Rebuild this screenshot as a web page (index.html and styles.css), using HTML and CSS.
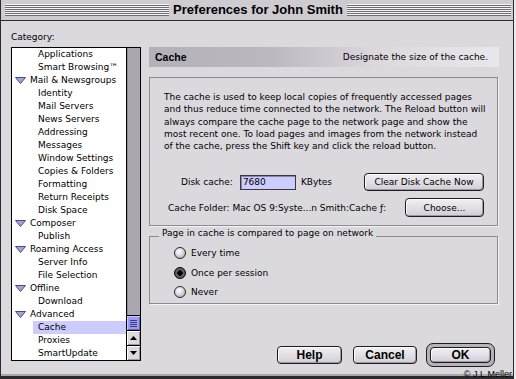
FILE: index.html
```html
<!DOCTYPE html>
<html>
<head>
  <meta charset="utf-8">
  <title>Preferences for John Smith</title>
  <link rel="stylesheet" href="styles.css">
</head>
<body>
  <div class="window">
    <div class="titlebar">
      <span class="stripes"></span>
      <h1 class="title">Preferences for John Smith</h1>
      <span class="stripes"></span>
    </div>

    <div class="main">
      <div class="sidebar">
        <div class="label">Category:</div>
        <div class="list">
          <ul class="items">
            <li class="child">Applications</li>
            <li class="child">Smart Browsing™</li>
            <li class="parent"><svg class="twisty" width="11" height="7" viewBox="0 0 11 7"><polygon points="0.5,0.5 10.5,0.5 5.5,6.5" /></svg>Mail &amp; Newsgroups</li>
            <li class="child">Identity</li>
            <li class="child">Mail Servers</li>
            <li class="child">News Servers</li>
            <li class="child">Addressing</li>
            <li class="child">Messages</li>
            <li class="child">Window Settings</li>
            <li class="child">Copies &amp; Folders</li>
            <li class="child">Formatting</li>
            <li class="child">Return Receipts</li>
            <li class="child">Disk Space</li>
            <li class="parent"><svg class="twisty" width="11" height="7" viewBox="0 0 11 7"><polygon points="0.5,0.5 10.5,0.5 5.5,6.5" /></svg>Composer</li>
            <li class="child">Publish</li>
            <li class="parent"><svg class="twisty" width="11" height="7" viewBox="0 0 11 7"><polygon points="0.5,0.5 10.5,0.5 5.5,6.5" /></svg>Roaming Access</li>
            <li class="child">Server Info</li>
            <li class="child">File Selection</li>
            <li class="parent"><svg class="twisty" width="11" height="7" viewBox="0 0 11 7"><polygon points="0.5,0.5 10.5,0.5 5.5,6.5" /></svg>Offline</li>
            <li class="child">Download</li>
            <li class="parent"><svg class="twisty" width="11" height="7" viewBox="0 0 11 7"><polygon points="0.5,0.5 10.5,0.5 5.5,6.5" /></svg>Advanced</li>
            <li class="child selected">Cache</li>
            <li class="child">Proxies</li>
            <li class="child">SmartUpdate</li>
          </ul>
          <div class="scrollbar">
            <div class="track"></div>
            <div class="thumb"><span class="grip"></span></div>
            <div class="arrow"><svg width="7" height="4" viewBox="0 0 7 4"><polygon points="3.5,0 7,4 0,4" /></svg></div>
            <div class="arrow"><svg width="7" height="4" viewBox="0 0 7 4"><polygon points="0,0 7,0 3.5,4" /></svg></div>
          </div>
        </div>
      </div>

      <div class="content">
        <div class="panel-head">
          <b>Cache</b>
          <span>Designate the size of the cache.</span>
        </div>

        <div class="box">
          <p class="info">The cache is used to keep local copies of frequently accessed pages<br>and thus reduce time connected to the network. The Reload button will<br>always compare the cache page to the network page and show the<br>most recent one. To load pages and images from the network instead<br>of the cache, press the Shift key and click the reload button.</p>
          <div class="row disk">
            <span>Disk cache:</span>
            <input class="field" type="text" value="7680">
            <span>KBytes</span>
            <button class="btn wide">Clear Disk Cache Now</button>
          </div>
          <div class="row folder">
            <span>Cache Folder: Mac OS 9:Syste...n Smith:Cache ƒ:</span>
            <button class="btn choose">Choose...</button>
          </div>
        </div>

        <fieldset class="group">
          <legend>Page in cache is compared to page on network</legend>
          <label class="radio"><span class="dot"></span>Every time</label>
          <label class="radio"><span class="dot on"></span>Once per session</label>
          <label class="radio"><span class="dot"></span>Never</label>
        </fieldset>

        <div class="actions">
          <button class="btn big">Help</button>
          <button class="btn big">Cancel</button>
          <span class="default"><button class="btn big ok">OK</button></span>
        </div>
      </div>
    </div>

    <div class="copyright">© J.L.Meller</div>
  </div>
</body>
</html>
```

FILE: styles.css
```css
*{margin: 0;padding: 0;box-sizing: border-box;}
ul{list-style: none;}
html, body{
  width: 100%;
  height: 100%;
  background-color: #eceaee;
}
body{
  font-family: "DejaVu Sans", sans-serif;
  font-size: 9px;
  color: #000;
}
.window{
  position: relative;
  width: 514px;
  height: 379px;
  background-color: #dcd9de;
  border-left: 1px solid #2c2a2e;
  border-right: 1px solid #2c2a2e;
  border-bottom: 3px solid #2c2a2e;
  box-shadow: inset 0 -2px 0 #a9a6ac;
}

/* title bar */
.titlebar{
  height: 21px;
  display: flex;
  align-items: center;
  padding: 0 2px 0 4px;
  background-color: #cfccd1;
  border-bottom: 1px solid #2c2a2e;
}
.stripes{
  flex: 1;
  height: 12px;
  background: repeating-linear-gradient(to bottom, #f6f4f7 0 1px, #6f6c72 1px 2px);
}
.title{
  margin: 0 4px;
  font-family: "Liberation Sans", sans-serif;
  font-size: 13px;
  font-weight: bold;
  line-height: 16px;
}

.main{
  display: flex;
  padding-left: 10px;
}

/* category list */
.sidebar{
  width: 130px;
  padding-top: 10px;
}
.label{
  line-height: 12px;
  margin-bottom: 4px;
}
.list{
  display: flex;
  height: 314px;
  border: 1px solid #000;
}
.items{
  flex: 1;
  background-color: #fff;
  overflow: hidden;
}
.items li{
  height: 13px;
  line-height: 13px;
  white-space: nowrap;
}
.parent{
  display: flex;
  align-items: center;
  padding-left: 3px;
}
.twisty{
  margin-right: 4px;
}
.twisty polygon{
  fill: #a4a2e6;
  stroke: #4c4a78;
  stroke-width: 1;
}
.child{
  margin-left: 21px;
  padding-left: 5px;
}
.selected{
  background-color: #ccccff;
}
.scrollbar{
  width: 14px;
  display: flex;
  flex-direction: column;
  border-left: 1px solid #000;
}
.track{
  flex: 1;
  background: linear-gradient(to right, #8f8c93 0 1px, #aaa7ae 1px);
}
.thumb{
  height: 15px;
  border-top: 1px solid #000;
  background-color: #9c9cf2;
  box-shadow: inset 1px 1px 0 #c8c8ff, inset -1px -1px 0 #6464b8;
  display: flex;
  align-items: center;
  justify-content: center;
}
.grip{
  width: 7px;
  height: 7px;
  background: repeating-linear-gradient(to bottom, #3c3c7a 0 1px, transparent 1px 2px);
}
.arrow{
  height: 15px;
  border-top: 1px solid #000;
  background-color: #dddadf;
  box-shadow: inset 1px 1px 0 #fff, inset -1px -1px 0 #9c99a0;
  display: flex;
  align-items: center;
  justify-content: center;
}

/* right panel */
.content{
  width: 350px;
  margin-left: 8px;
  padding-top: 26px;
}
.panel-head{
  height: 20px;
  display: flex;
  align-items: center;
  justify-content: space-between;
  padding: 0 11px 0 6px;
  background: linear-gradient(to right, #b4b0b8 0%, #bcb8c0 35%, #dcd8de 65%, #e9e6ec 100%);
}
.panel-head b{
  font-family: "Liberation Sans", sans-serif;
  font-size: 10.5px;
}
.box{
  width: 349px;
  height: 149px;
  margin-top: 10px;
  padding: 13px 13px 0 14px;
  border: 1px solid #8d8a90;
  box-shadow: 1px 1px 0 #f4f2f5;
}
.info{
  line-height: 12.25px;
  white-space: nowrap;
}
.row{
  display: flex;
  align-items: center;
}
.disk{
  margin-top: 21px;
  padding-left: 17px;
  gap: 7px;
}
.folder{
  margin-top: 7px;
  padding-left: 4px;
}
.field{
  width: 56px;
  height: 15px;
  padding-left: 2px;
  font-family: "DejaVu Sans", sans-serif;
  font-size: 9px;
  background-color: #ccccff;
  border: 1px solid #3a383c;
  box-shadow: inset 1px 1px 0 #8886aa;
  outline: none;
}
.disk .field + span{
  margin-left: -2px;
}
.btn{
  font-family: "DejaVu Sans", sans-serif;
  font-size: 9px;
  color: #000;
  border: 1px solid #1e1c20;
  border-radius: 4px;
  background: linear-gradient(to bottom, #f2f0f4, #d2ced6);
  box-shadow: inset 1px 1px 0 #fff, inset -1px -1px 0 #9e9aa2;
}
.wide{
  width: 120px;
  height: 18px;
  margin-left: auto;
}
.choose{
  width: 79px;
  height: 19px;
  margin-left: auto;
}

/* radio group */
.group{
  width: 349px;
  height: 77px;
  margin-top: 1px;
  padding: 0 0 3px 24px;
  border: 1px solid #8d8a90;
  box-shadow: 1px 1px 0 #f4f2f5;
  display: flex;
  flex-direction: column;
  gap: 4px;
}
.group legend{
  margin-left: -15px;
  padding: 0 3px 6px;
  line-height: 12px;
}
.radio{
  height: 16px;
  display: flex;
  align-items: center;
  gap: 5px;
}
.dot{
  width: 12px;
  height: 12px;
  border-radius: 50%;
  border: 1px solid #2a282c;
  background: radial-gradient(circle at 40% 35%, #ffffff 0, #e4e2e6 35%, #a29fa6 100%);
}
.dot.on{
  border-color: #000;
  background: radial-gradient(circle at 50% 50%, #000 0 2.5px, #6a686c 3px, #48464a 100%);
}

/* bottom buttons */
.actions{
  display: flex;
  justify-content: flex-end;
  align-items: center;
  margin-top: 39px;
  padding-right: 4px;
}
.big{
  font-family: "Liberation Sans", sans-serif;
  font-size: 12px;
  font-weight: bold;
  width: 65px;
  height: 18px;
}
.big + .big{
  width: 64px;
  margin-left: 11px;
}
.default{
  margin-left: 9px;
  padding: 3px;
  border: 1px solid #1e1c20;
  border-radius: 7px;
  background-color: #b6b2ba;
  display: flex;
}
.ok{
  width: 61px;
  height: 16px;
}
.copyright{
  position: absolute;
  right: 1px;
  bottom: -3px;
  font-family: "Liberation Sans", sans-serif;
  font-size: 9px;
  line-height: 10px;
}
```
